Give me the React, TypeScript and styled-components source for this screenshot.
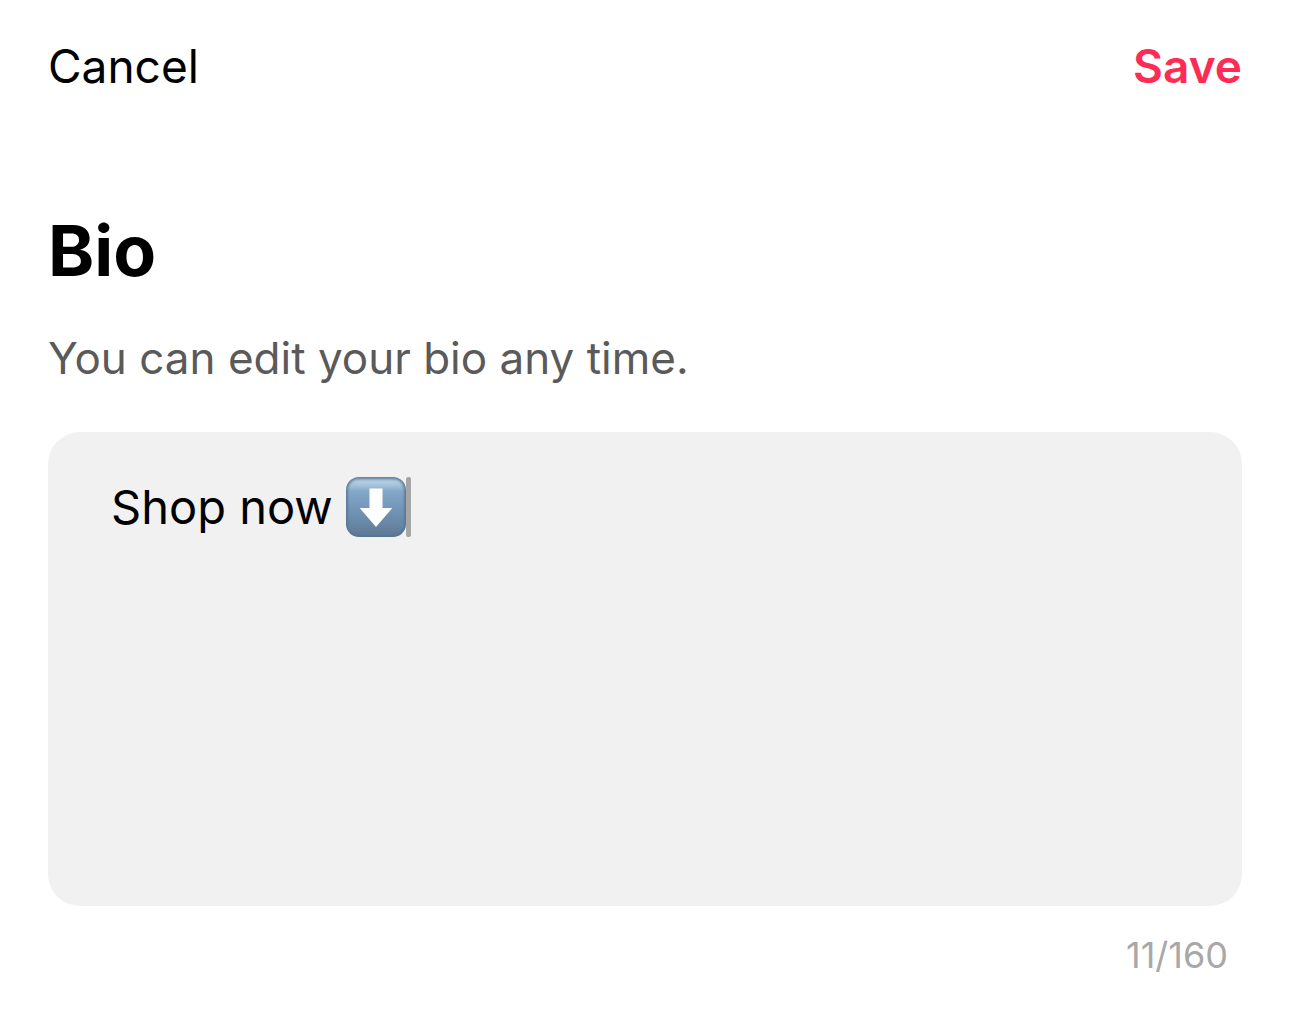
import React, { useState } from "react";
import styled, { createGlobalStyle } from "styled-components";

const GlobalStyle = createGlobalStyle`
  *, *::before, *::after {
    box-sizing: border-box;
  }
  body {
    margin: 0;
    background: #ffffff;
    color: #000000;
    font-family: Inter, "Liberation Sans", sans-serif;
  }
`;

const Screen = styled.form`
  display: flex;
  flex-direction: column;
  padding: 38px 48px;
`;

const TopBar = styled.header`
  display: flex;
  justify-content: space-between;
  align-items: center;
`;

const TextButton = styled.button<{ $primary?: boolean }>`
  padding: 0;
  border: 0;
  background: none;
  font-family: inherit;
  font-size: 46px;
  line-height: 56px;
  font-weight: ${(p) => (p.$primary ? 600 : 400)};
  color: ${(p) => (p.$primary ? "#fe2c55" : "#000000")};
  cursor: pointer;
`;

const Title = styled.h1`
  margin: 115px 0 0;
  font-size: 70px;
  line-height: 84px;
  font-weight: 700;
`;

const Hint = styled.p`
  margin: 37px 0 0;
  font-size: 44px;
  line-height: 56px;
  color: #5a5a5a;
`;

const Field = styled.label`
  display: flex;
  align-items: flex-start;
  min-height: 474px;
  margin-top: 46px;
  padding: 45px 63px;
  border-radius: 32px;
  background: #f1f1f1;
  cursor: text;
`;

const BioInput = styled.textarea`
  field-sizing: content;
  min-width: 0;
  margin: 0 13px 0 0;
  padding: 0;
  border: 0;
  outline: 0;
  resize: none;
  overflow: hidden;
  background: transparent;
  font-family: inherit;
  font-size: 47px;
  line-height: 60px;
  color: #000000;
`;

const Emoji = styled.svg`
  flex: none;
  width: 60px;
  height: 60px;
`;

const Caret = styled.span`
  flex: none;
  width: 5px;
  height: 60px;
  border-radius: 2px;
  background: #a6a6a6;
`;

const Counter = styled.output`
  align-self: flex-end;
  margin-top: 27px;
  padding-right: 14px;
  font-size: 36px;
  line-height: 44px;
  color: #a8a8a8;
`;

const EMOJI_LENGTH = 3;
const MAX_LENGTH = 160;

function DownArrowEmoji() {
  return (
    <Emoji viewBox="0 0 60 60" role="img" aria-label="down arrow">
      <defs>
        <linearGradient id="face" x1="0" y1="0" x2="0" y2="1">
          <stop offset="0" stopColor="#a3c0d8" />
          <stop offset="0.06" stopColor="#b4cde0" />
          <stop offset="0.22" stopColor="#85a8c9" />
          <stop offset="0.55" stopColor="#7195b8" />
          <stop offset="1" stopColor="#607b95" />
        </linearGradient>
        <linearGradient id="rim" x1="0" y1="0" x2="0" y2="1">
          <stop offset="0" stopColor="#5f819f" />
          <stop offset="1" stopColor="#567490" />
        </linearGradient>
        <filter id="soften" x="-5%" y="-5%" width="110%" height="110%">
          <feGaussianBlur stdDeviation="0.9" />
        </filter>
      </defs>
      <rect x="0" y="0" width="60" height="60" rx="13" fill="url(#rim)" />
      <rect x="2" y="2" width="56" height="56" rx="11" fill="url(#face)" filter="url(#soften)" />
      <path d="M23.5 11.5h13v19.5h9.8L30 50 13.7 31h9.8z" fill="#ffffff" />
    </Emoji>
  );
}

export default function App() {
  const [bio, setBio] = useState("Shop now");
  return (
    <>
      <GlobalStyle />
      <Screen onSubmit={(e) => e.preventDefault()}>
        <TopBar>
          <TextButton type="button">Cancel</TextButton>
          <TextButton type="submit" $primary>
            Save
          </TextButton>
        </TopBar>
        <Title id="bio-title">Bio</Title>
        <Hint id="bio-hint">You can edit your bio any time.</Hint>
        <Field htmlFor="bio">
          <BioInput
            id="bio"
            rows={1}
            spellCheck={false}
            aria-labelledby="bio-title"
            aria-describedby="bio-hint"
            maxLength={MAX_LENGTH - EMOJI_LENGTH}
            value={bio}
            onChange={(e) => setBio(e.target.value)}
          />
          <DownArrowEmoji />
          <Caret />
        </Field>
        <Counter htmlFor="bio">{`${bio.length + EMOJI_LENGTH}/${MAX_LENGTH}`}</Counter>
      </Screen>
    </>
  );
}
